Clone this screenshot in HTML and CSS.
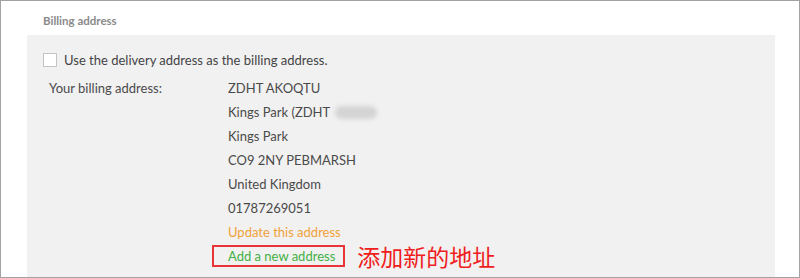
FILE: index.html
```
<!DOCTYPE html>
<html>
<head>
<meta charset="utf-8">
<link rel="stylesheet" href="styles.css">
</head>
<body>
<div class="frame">
  <div class="heading">Billing address</div>
  <div class="panel">
    <label class="check-row"><span class="box"></span><span>Use the delivery address as the billing address.</span></label>
    <div class="addr">
      <div class="label">Your billing address:</div>
      <div class="values">
        <div class="line">ZDHT AKOQTU</div>
        <div class="line">Kings Park (ZDHT <span class="blur"></span></div>
        <div class="line">Kings Park</div>
        <div class="line">CO9 2NY PEBMARSH</div>
        <div class="line">United Kingdom</div>
        <div class="line">01787269051</div>
        <div class="line"><a class="update">Update this address</a></div>
        <div class="line add-row"><span class="mark"><a class="add">Add a new address</a></span><span class="note">添加新的地址</span></div>
      </div>
    </div>
  </div>
</div>
</body>
</html>
```
FILE: styles.css
```
html, body { margin: 0; padding: 0; background: #fff; }
body { font-family: "Lato", "Liberation Sans", sans-serif; color: #4a4a4a; }
.frame {
  box-sizing: border-box;
  width: 800px;
  height: 278px;
  border: 1px solid #a3a3a3;
  overflow: hidden;
}
.heading {
  font-size: 11.5px;
  font-weight: bold;
  color: #8a8a8a;
  padding: 13px 0 0 42px;
  height: 21px;
  line-height: 14px;
}
.panel {
  margin-left: 26px;
  width: 748px;
  height: 243px;
  background: #f1f1f1;
  padding: 16px 0 0 16px;
  box-sizing: border-box;
}
.check-row {
  display: flex;
  align-items: center;
  gap: 7px;
  font-size: 13px;
  color: #444;
  height: 18px;
}
.box {
  width: 12px;
  height: 12px;
  background: #fff;
  border: 1px solid #c4c4c4;
}
.addr {
  display: grid;
  grid-template-columns: 179px 1fr;
  margin-top: 7px;
  padding-left: 6px;
  font-size: 13px;
  color: #4a4a4a;
}
.line { height: 24px; line-height: 24px; display: flex; align-items: center; }
.label { line-height: 24px; }
.blur {
  display: inline-block;
  width: 42px;
  height: 13px;
  margin-left: 5px;
  border-radius: 7px;
  background: #d4d4d4;
  filter: blur(2px);
}
.update { color: #f2a13a; }
.add { color: #43b043; }
.mark {
  border: 2px solid #e8353a;
  height: 18px;
  line-height: 18px;
  padding: 0 8px 0 14px;
  margin-left: -16px;
  display: flex;
  align-items: center;
}
.note {
  margin-left: 12px;
  color: #f01d1d;
  font-family: "Noto Sans CJK SC", sans-serif;
  font-size: 23px;
  line-height: 24px;
}
```
